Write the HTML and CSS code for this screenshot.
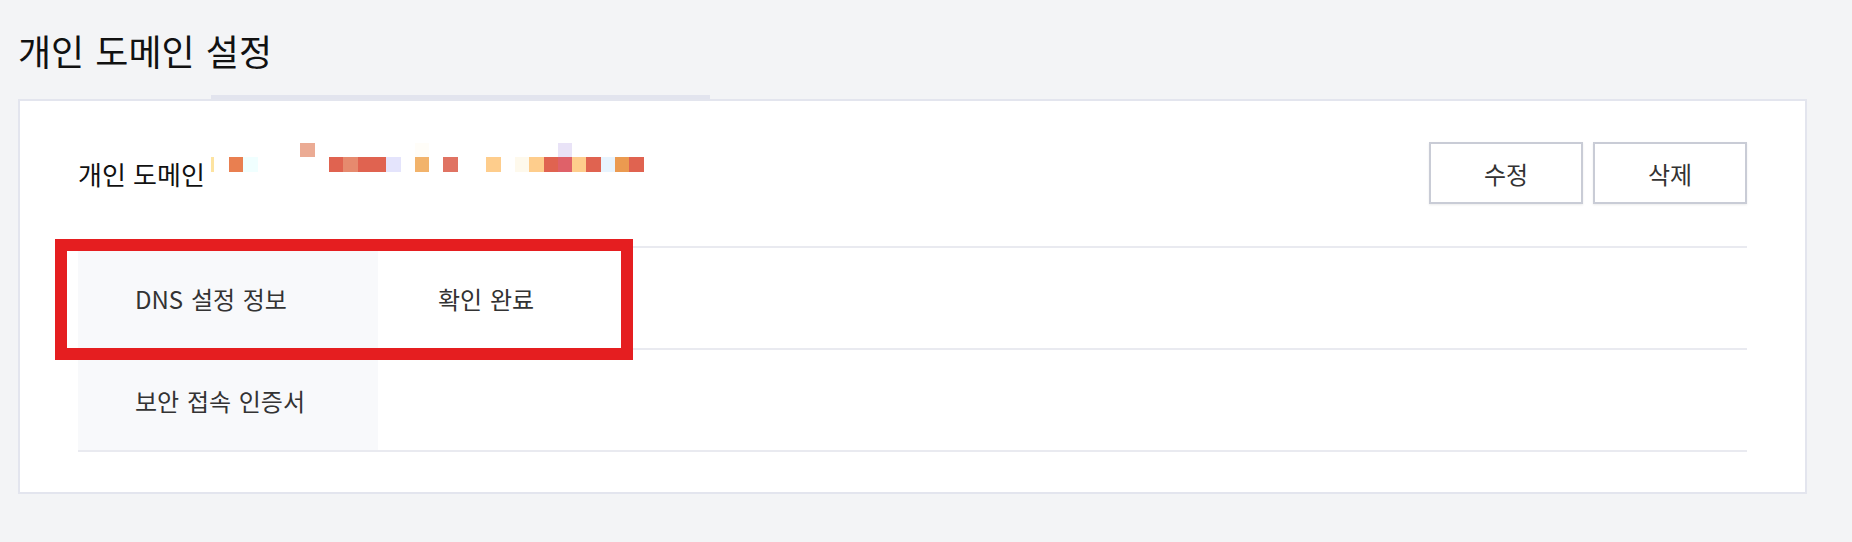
FILE: index.html
```html
<!DOCTYPE html>
<html lang="ko">

<head>
    <meta charset="UTF-8">
    <meta name="viewport" content="width=device-width, initial-scale=1.0">
    <title>개인 도메인 설정</title>
    <link rel="stylesheet" href="styles.css">
</head>

<body>

    <h1 class="page-title">개인 도메인 설정</h1>

    <div class="tab-bar"></div>
    <div class="card">
        <div class="card-head">
            <div class="domain">
                <span class="domain-label">개인 도메인</span>
                <!-- 가려진 도메인 주소 -->
                <div class="mosaic">
                    <div class="mosaic-row">
                        <span class="px lead"></span>
                        <span class="px"></span>
                        <span class="px"></span>
                        <span class="px"></span>
                        <span class="px"></span>
                        <span class="px"></span>
                        <span class="px top-a"></span>
                        <span class="px"></span>
                        <span class="px"></span>
                        <span class="px"></span>
                        <span class="px"></span>
                        <span class="px"></span>
                        <span class="px"></span>
                        <span class="px"></span>
                        <span class="px top-b"></span>
                        <span class="px"></span>
                        <span class="px"></span>
                        <span class="px"></span>
                        <span class="px"></span>
                        <span class="px"></span>
                        <span class="px"></span>
                        <span class="px"></span>
                        <span class="px"></span>
                        <span class="px"></span>
                        <span class="px top-c"></span>
                    </div>
                    <div class="mosaic-row">
                        <span class="px lead sliver"></span>
                        <span class="px c-orange"></span>
                        <span class="px c-cyan"></span>
                        <span class="px"></span>
                        <span class="px"></span>
                        <span class="px"></span>
                        <span class="px"></span>
                        <span class="px"></span>
                        <span class="px c-red"></span>
                        <span class="px c-salmon"></span>
                        <span class="px c-red"></span>
                        <span class="px c-red"></span>
                        <span class="px c-lilac"></span>
                        <span class="px"></span>
                        <span class="px c-amber"></span>
                        <span class="px"></span>
                        <span class="px c-coral"></span>
                        <span class="px"></span>
                        <span class="px"></span>
                        <span class="px c-peach"></span>
                        <span class="px"></span>
                        <span class="px c-cream"></span>
                        <span class="px c-peach"></span>
                        <span class="px c-red"></span>
                        <span class="px c-rose"></span>
                        <span class="px c-peach"></span>
                        <span class="px c-red"></span>
                        <span class="px c-ice"></span>
                        <span class="px c-tan"></span>
                        <span class="px c-red"></span>
                    </div>
                </div>
            </div>
            <div class="actions">
                <button class="btn">수정</button>
                <button class="btn">삭제</button>
            </div>
        </div>

        <table class="info-table">
            <tbody>
                <tr>
                    <th>DNS 설정 정보</th>
                    <td>확인 완료</td>
                </tr>
                <tr>
                    <th>보안 접속 인증서</th>
                    <td></td>
                </tr>
            </tbody>
        </table>

        <div class="highlight"></div>
    </div>

</body>

</html>
```

FILE: styles.css
```css
body {
    font-family: "Noto Sans CJK KR", "Noto Sans", sans-serif;
    margin: 0;
    padding: 0 45px 0 18px;
    background-color: #f3f4f6;
    color: #111;
}

.page-title {
    margin: 0;
    padding-top: 24px;
    height: 71px;
    font-size: 36px;
    font-weight: 400;
    line-height: 52px;
    word-spacing: 1px;
    box-sizing: border-box;
}

.tab-bar {
    margin-left: 193px;
    width: 499px;
    height: 4px;
    margin-top: 24px;
    background-color: #e2e4ee;
}

.card {
    position: relative;
    background-color: #fff;
    border: 2px solid #e3e5ee;
    padding: 41px 58px 40px 58px;
}

.card-head {
    display: flex;
    justify-content: space-between;
    align-items: center;
    margin-bottom: 42px;
}

.domain {
    display: flex;
    align-items: center;
}

.domain-label {
    width: 133px;
    font-size: 26px;
    line-height: 30px;
    white-space: nowrap;
    margin-top: 2px;
}

.mosaic {
    display: flex;
    flex-direction: column;
    margin-top: -32px;
}

.mosaic-row {
    display: flex;
}

.mosaic-row:first-child .px {
    height: 14px;
}

.px {
    display: block;
    width: 14.3px;
    height: 15px;
}

.px.lead {
    width: 3px;
    margin-right: 15px;
}

.px.sliver {
    background-color: #fde3a0;
}

.c-orange { background-color: #e97f50; }
.c-cyan { background-color: #f0ffff; }
.c-red { background-color: #e06350; }
.c-salmon { background-color: #e68a6e; }
.c-lilac { background-color: #e4e4fc; }
.c-amber { background-color: #f2b36b; }
.c-coral { background-color: #e07363; }
.c-peach { background-color: #fecd8c; }
.c-cream { background-color: #fef9ec; }
.c-rose { background-color: #df6169; }
.c-ice { background-color: #e8f4fe; }
.c-tan { background-color: #eb9a50; }

.top-a { background-color: #ebab94; }
.top-b { background-color: #fffdf8; }
.top-c { background-color: #e9e3f7; }

.actions {
    display: flex;
    gap: 10px;
}

.btn {
    width: 154px;
    height: 62px;
    background-color: #fff;
    border: 2px solid #c9ccd6;
    box-shadow: 0 1px 2px rgba(0, 0, 0, 0.08);
    font-family: inherit;
    font-size: 24px;
    color: #333;
    cursor: pointer;
}

.info-table {
    width: 100%;
    border-collapse: collapse;
    border-top: 2px solid #e9eaf0;
}

.info-table th,
.info-table td {
    height: 100px;
    padding: 0;
    border-bottom: 2px solid #e9eaf0;
    font-size: 24px;
    font-weight: 400;
    color: #333;
    text-align: left;
    word-spacing: 1px;
}

.info-table th {
    width: 300px;
    padding-left: 57px;
    box-sizing: border-box;
    background-color: #f8f9fb;
}

.info-table td {
    padding-left: 60px;
}

.highlight {
    position: absolute;
    left: 35px;
    top: 138px;
    width: 554px;
    height: 97px;
    border: 12px solid #e51e20;
}
```
